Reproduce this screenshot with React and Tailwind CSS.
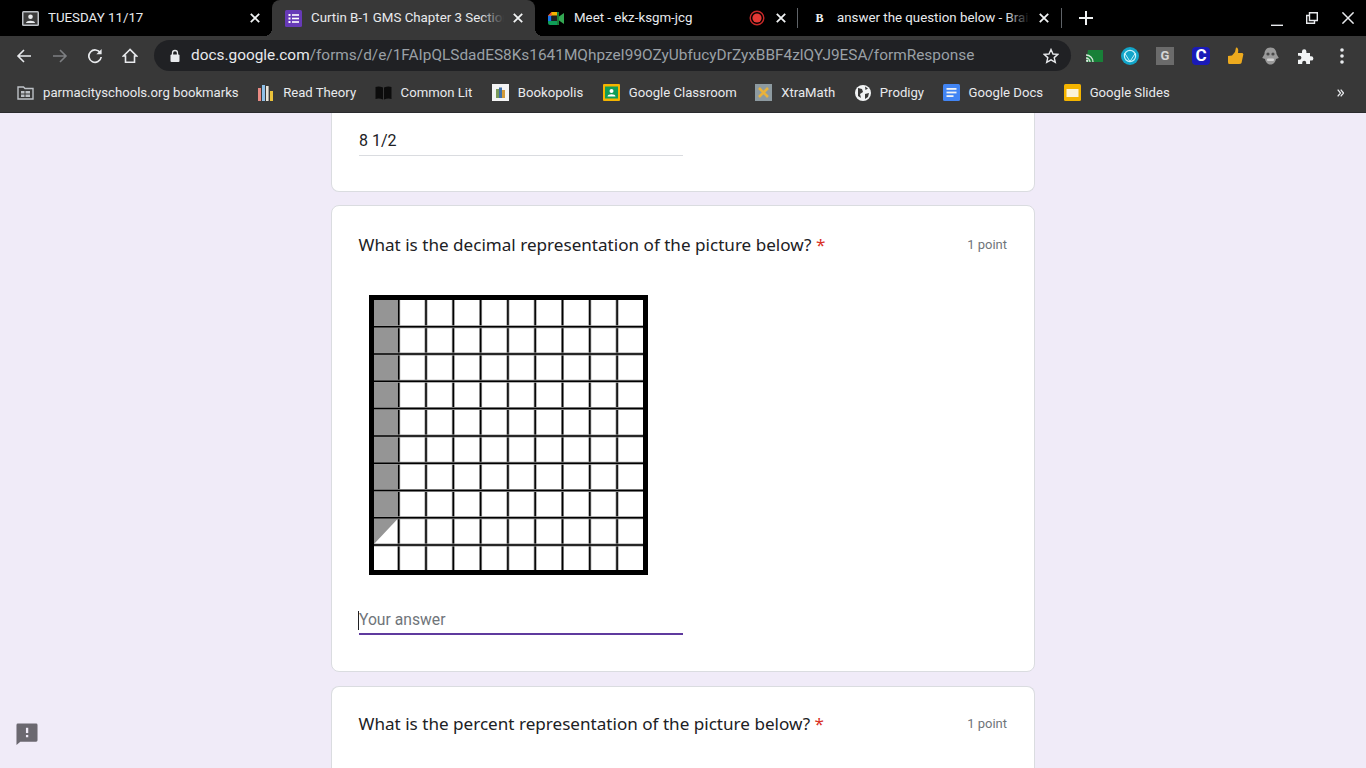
import React from 'react';

const CloseIcon = ({ className = '' }) => (
  <svg className={`w-[10px] h-[10px] shrink-0 ${className}`} viewBox="0 0 10 10" stroke="#f1f3f4" strokeWidth="1.8" fill="none">
    <path d="M0.8 0.8 L9.2 9.2 M9.2 0.8 L0.8 9.2" />
  </svg>
);

const ClassroomTabIcon = () => (
  <svg className="w-[17px] h-[17px] shrink-0" viewBox="0 0 17 17">
    <rect x="0" y="1" width="17" height="15" rx="1.5" fill="#bdc1c6" />
    <rect x="1.5" y="2.5" width="14" height="12" fill="#3c3c3c" />
    <circle cx="8.5" cy="6.8" r="2.3" fill="#e8eaed" />
    <path d="M4 13 C4 10 13 10 13 13 Z" fill="#e8eaed" />
  </svg>
);

const FormsIcon = () => (
  <svg className="w-[17px] h-[17px] shrink-0" viewBox="0 0 17 17">
    <rect width="17" height="17" rx="1.5" fill="#673ab7" />
    <g fill="#fff">
      <rect x="3.5" y="4" width="2" height="2" />
      <rect x="7" y="4.2" width="7" height="1.6" />
      <rect x="3.5" y="7.5" width="2" height="2" />
      <rect x="7" y="7.7" width="7" height="1.6" />
      <rect x="3.5" y="11" width="2" height="2" />
      <rect x="7" y="11.2" width="7" height="1.6" />
    </g>
  </svg>
);

const MeetIcon = () => (
  <svg className="w-[17px] h-[17px] shrink-0" viewBox="0 0 17 17">
    <path d="M3.5 2 H11 V6 H0 Z" fill="#f4b400" />
    <rect x="0" y="5.5" width="3.5" height="6" fill="#1a73e8" />
    <path d="M0 11 H11 V15 H2 Q0 15 0 13 Z" fill="#0f9d58" />
    <rect x="3.5" y="5.5" width="7.5" height="5.5" fill="#1f1f1f" />
    <path d="M11 2 V15 H9 V2 Z" fill="#188038" />
    <path d="M11 6.5 L16 3 V14 L11 10.5 Z" fill="#34a853" />
    <path d="M0 5.5 L3.5 2 V5.5 Z" fill="#ea4335" />
  </svg>
);

const RecordIcon = () => (
  <svg className="w-[16px] h-[16px] shrink-0 mr-[2px]" viewBox="0 0 16 16">
    <circle cx="8" cy="8" r="6.8" fill="none" stroke="#c62828" strokeWidth="1.4" />
    <circle cx="8" cy="8" r="4.6" fill="#e53935" />
  </svg>
);

const NewTabIcon = () => (
  <svg className="block w-[14px] h-[14px]" viewBox="0 0 14 14" fill="none" stroke="#f1f3f4" strokeWidth="2">
    <path d="M7 0 V14 M0 7 H14" />
  </svg>
);

const Tab = ({ icon, title, active, extra, fade }) => (
  <div className={`relative w-[263px] h-[36px] flex items-center shrink-0 pl-[13px] pr-[12px] ${active ? 'bg-[#383838] rounded-t-lg' : ''}`}>
    {active && (
      <>
        <span className="absolute -left-2 bottom-0 w-2 h-2 bg-[radial-gradient(circle_at_0_0,#000_8px,#383838_8px)]" />
        <span className="absolute -right-2 bottom-0 w-2 h-2 bg-[radial-gradient(circle_at_100%_0,#000_8px,#383838_8px)]" />
      </>
    )}
    {icon}
    <div className="relative flex-1 min-w-0 ml-[9px] overflow-hidden whitespace-nowrap text-[13.3px] text-[#e8eaed]">
      {title}
      {fade && (
        <div className={`absolute right-0 top-0 bottom-0 w-6 bg-gradient-to-r from-transparent ${active ? 'to-[#383838]' : 'to-black'}`} />
      )}
    </div>
    {extra}
    <CloseIcon className="ml-[9px]" />
  </div>
);

const ExtensionIcons = () => (
  <div className="flex items-center flex-1">
    <svg className="ml-[15px] w-[17px] h-[12px]" viewBox="0 0 17 12">
      <path d="M2 0 H17 V12 H0 Z" fill="#188038" />
      <path d="M0 5 A7 7 0 0 1 7 12 M0 8 A4 4 0 0 1 4 12" fill="none" stroke="#d9e7dc" strokeWidth="1.3" />
      <circle cx="1.2" cy="10.8" r="1.2" fill="#d9e7dc" />
    </svg>
    <svg className="ml-[18px] w-[18px] h-[18px]" viewBox="0 0 18 18">
      <circle cx="9" cy="9" r="9" fill="#12a5c9" />
      <circle cx="9" cy="9" r="5.6" fill="none" stroke="#c6f1fa" strokeWidth="1.2" />
      <path d="M3.5 6 L9 14.5 L14.5 6" fill="none" stroke="#c6f1fa" strokeWidth="1" />
    </svg>
    <div className="ml-[17px] w-[18px] h-[18px] bg-[#6b6b6b] flex items-center justify-center text-[13px] font-bold text-[#d5d5d5]">G</div>
    <div className="ml-[18px] w-[18px] h-[18px] rounded-[4px] bg-[#1a1ab8] flex items-center justify-center text-[17px] font-bold text-white">C</div>
    <svg className="ml-[17px] w-[17px] h-[18px]" viewBox="0 0 17 18">
      <path d="M1 9 L5 8.5 L8 5 L9 0.5 Q12 0.5 11 6 H15.5 Q17 7 16 9 L14.5 16 Q14 17 12 17 H2 Q1 17 1 15 Z" fill="#edaa1e" />
    </svg>
    <svg className="ml-[18px] w-[17px] h-[18px]" viewBox="0 0 17 18">
      <path d="M8.5 0.5 C13 0.5 14.5 4 14.5 7 L16.8 11 L14 12 C13 16 11 17.5 8.5 17.5 C6 17.5 4 16 3 12 L0.2 11 L2.5 7 C2.5 4 4 0.5 8.5 0.5 Z" fill="#9a9a9a" />
      <circle cx="6" cy="7" r="1.6" fill="#4a4a4a" />
      <circle cx="11" cy="7" r="1.6" fill="#4a4a4a" />
      <rect x="5" y="11.5" width="7" height="2.5" rx="1" fill="#d2d2d2" />
    </svg>
    <svg className="ml-[18px] w-[17px] h-[17px]" viewBox="0 0 17 17" fill="#f1f3f4">
      <path d="M1 5 H5 V3.5 A2.2 2.2 0 0 1 9.4 3.5 V5 H13 V8.2 H14.2 A2.2 2.2 0 0 1 14.2 12.6 H13 V16 H9.2 V14.8 A2 2 0 0 0 5.2 14.8 V16 H1 V11.8 H2.4 A2 2 0 0 0 2.4 7.8 H1 Z" />
    </svg>
    <svg className="ml-[26px] w-[4px] h-[16px]" viewBox="0 0 4 16" fill="#e8eaed">
      <circle cx="2" cy="2" r="1.8" />
      <circle cx="2" cy="8" r="1.8" />
      <circle cx="2" cy="14" r="1.8" />
    </svg>
  </div>
);

const Toolbar = () => (
  <div className="h-[40px] bg-[#383838] flex items-center">
    <div className="w-[154px] flex items-center shrink-0">
      <svg className="ml-[16px] w-[16px] h-[16px]" viewBox="0 0 16 16" fill="none" stroke="#e8eaed" strokeWidth="1.6">
        <path d="M15 8 H2 M8 2 L2 8 L8 14" />
      </svg>
      <svg className="ml-[20px] w-[16px] h-[16px]" viewBox="0 0 16 16" fill="none" stroke="#7d7f82" strokeWidth="1.6">
        <path d="M1 8 H14 M8 2 L14 8 L8 14" />
      </svg>
      <svg className="ml-[19px] w-[16px] h-[16px]" viewBox="0 0 16 16" fill="none" stroke="#e8eaed" strokeWidth="1.7">
        <path d="M13.4 5 A6.2 6.2 0 1 0 14.2 9" />
        <path d="M14.6 1 V6.2 H9.4 Z" fill="#e8eaed" stroke="none" />
      </svg>
      <svg className="ml-[19px] w-[16px] h-[16px]" viewBox="0 0 16 16" fill="none" stroke="#e8eaed" strokeWidth="1.6">
        <path d="M8 1.5 L1.5 8 H3.5 V14.2 H12.5 V8 H14.5 Z" />
      </svg>
    </div>
    <div className="w-[917px] h-[31px] shrink-0 self-start mt-[4px] rounded-full bg-[#202124] flex items-center">
      <svg className="ml-[15px] w-[12px] h-[14px]" viewBox="0 0 12 14" fill="#e8eaed">
        <rect x="1.5" y="5.5" width="9" height="7.5" rx="1" />
        <path d="M3.5 6 V4 A2.5 2.5 0 0 1 8.5 4 V6" fill="none" stroke="#e8eaed" strokeWidth="1.3" />
      </svg>
      <div className="ml-[10px] text-[15.4px] text-[#9aa0a6] whitespace-nowrap">
        <span className="text-[#e8eaed]">docs.google.com</span>/forms/d/e/1FAIpQLSdadES8Ks1641MQhpzeI99OZyUbfucyDrZyxBBF4zlQYJ9ESA/formResponse
      </div>
      <svg className="ml-auto mr-[12px] w-[16px] h-[16px]" viewBox="0 0 16 16" fill="none" stroke="#e8eaed" strokeWidth="1.4">
        <path d="M8 1.5 L10 6 L14.9 6.4 L11.2 9.6 L12.3 14.4 L8 11.9 L3.7 14.4 L4.8 9.6 L1.1 6.4 L6 6 Z" />
      </svg>
    </div>
    <ExtensionIcons />
  </div>
);

const Bookmark = ({ icon, label, className }) => (
  <div className={`flex items-center shrink-0 ${className}`}>
    {icon}
    <span className="ml-[9px] text-[13.15px] text-[#e8eaed] whitespace-nowrap">{label}</span>
  </div>
);

const bookmarkIcons = {
  folder: (
    <svg className="w-[17px] h-[14px] shrink-0" viewBox="0 0 17 14">
      <path d="M1 1 H6.5 L8 2.5 H16 V13 H1 Z" fill="none" stroke="#bdc1c6" strokeWidth="1.4" />
      <rect x="4" y="5" width="9" height="6" fill="#bdc1c6" />
      <path d="M8 5 V11 M4 8 H13" stroke="#383838" strokeWidth="1" />
    </svg>
  ),
  read: (
    <svg className="w-[17px] h-[17px] shrink-0" viewBox="0 0 17 17">
      <rect x="1" y="4" width="3" height="13" fill="#e98a83" />
      <rect x="5" y="1" width="3" height="16" fill="#8fc0e8" />
      <rect x="9" y="2" width="2.6" height="15" fill="#e8e3d8" />
      <rect x="13" y="7" width="3" height="10" fill="#eac23a" />
    </svg>
  ),
  common: (
    <svg className="w-[17px] h-[14px] shrink-0" viewBox="0 0 17 14">
      <path d="M0.5 1 Q4 0 8 1.5 V13.5 Q4 12 0.5 13 Z M16.5 1 Q13 0 9 1.5 V13.5 Q13 12 16.5 13 Z" fill="#0c0c0c" />
    </svg>
  ),
  book: (
    <svg className="w-[17px] h-[17px] shrink-0" viewBox="0 0 17 17">
      <rect width="17" height="17" fill="#f4f4f4" />
      <rect x="4" y="5" width="3" height="9" fill="#7a9a5a" />
      <rect x="7" y="3.5" width="3" height="10.5" fill="#3f6fa8" />
      <rect x="10" y="6" width="3" height="8" fill="#d19a3a" />
    </svg>
  ),
  classroom: (
    <svg className="w-[17px] h-[17px] shrink-0" viewBox="0 0 17 17">
      <rect width="17" height="17" rx="1" fill="#f4b400" />
      <rect x="2" y="2.5" width="13" height="12" fill="#0f9d58" />
      <circle cx="8.5" cy="7" r="2" fill="#fff" />
      <path d="M4.5 12.5 C4.5 9.5 12.5 9.5 12.5 12.5 Z" fill="#fff" />
    </svg>
  ),
  xtra: (
    <svg className="w-[17px] h-[17px] shrink-0" viewBox="0 0 17 17">
      <rect width="17" height="17" fill="#8d9aa0" />
      <path d="M4 4 L13 13 M13 4 L4 13" stroke="#e9b23a" strokeWidth="2.6" />
    </svg>
  ),
  prodigy: (
    <svg className="w-[16px] h-[16px] shrink-0" viewBox="0 0 16 16">
      <circle cx="8" cy="8" r="8" fill="#f1f3f4" />
      <path d="M3 3 L7 4 L8 7 L5 9 L6 13 L3 11 Z M10 9 L14 8 L13 12 L10 14 Z M10 1.5 L13 3.5 L10.5 5 Z" fill="#383838" />
    </svg>
  ),
  docs: (
    <svg className="w-[17px] h-[17px] shrink-0" viewBox="0 0 17 17">
      <rect width="17" height="17" rx="1.5" fill="#4285f4" />
      <rect x="3.5" y="4" width="10" height="1.8" fill="#f1f3f4" />
      <rect x="3.5" y="7.6" width="10" height="1.8" fill="#f1f3f4" />
      <rect x="3.5" y="11.2" width="7" height="1.8" fill="#f1f3f4" />
    </svg>
  ),
  slides: (
    <svg className="w-[17px] h-[17px] shrink-0" viewBox="0 0 17 17">
      <rect width="17" height="17" rx="1.5" fill="#f4b400" />
      <rect x="2.5" y="5" width="12" height="8" fill="#fbf3d8" />
    </svg>
  ),
};

const BookmarksBar = () => (
  <div className="h-[34px] bg-[#383838] flex items-center pb-[2px] border-b border-[#2a2b2e] box-content">
    <Bookmark className="ml-[17px]" icon={bookmarkIcons.folder} label="parmacityschools.org bookmarks" />
    <Bookmark className="ml-[18.5px]" icon={bookmarkIcons.read} label="Read Theory" />
    <Bookmark className="ml-[18.5px]" icon={bookmarkIcons.common} label="Common Lit" />
    <Bookmark className="ml-[19.5px]" icon={bookmarkIcons.book} label="Bookopolis" />
    <Bookmark className="ml-[19.5px]" icon={bookmarkIcons.classroom} label="Google Classroom" />
    <Bookmark className="ml-[18.5px]" icon={bookmarkIcons.xtra} label="XtraMath" />
    <Bookmark className="ml-[19.5px]" icon={bookmarkIcons.prodigy} label="Prodigy" />
    <Bookmark className="ml-[18.5px]" icon={bookmarkIcons.docs} label="Google Docs" />
    <Bookmark className="ml-[20.5px]" icon={bookmarkIcons.slides} label="Google Slides" />
    <svg className="ml-auto mr-[22px] w-[7px] h-[8px]" viewBox="0 0 7 8" fill="none" stroke="#e8eaed" strokeWidth="1.3">
      <path d="M0.7 0.7 L3.5 4 L0.7 7.3 M3.7 0.7 L6.5 4 L3.7 7.3" />
    </svg>
  </div>
);

// the grid picture from the question, 10 x 10 with 8.5 cells shaded
const GridPicture = () => {
  const xs = [0, 1, 2, 3, 4, 5, 6, 7, 8].map((i) => 29.7 + i * 27.3);
  const ys = [0, 1, 2, 3, 4, 5, 6, 7, 8].map((i) => 31.7 + i * 27.3);
  return (
    <svg className="block w-[279px] h-[280px]" viewBox="0 0 279 280">
      <rect width="279" height="280" fill="#000" />
      <rect x="5" y="5" width="269" height="270" fill="#fff" />
      <rect x="5" y="5" width="25" height="218" fill="#959595" />
      <path d="M5 223 H29.5 L5 249 Z" fill="#959595" />
      {xs.map((x) => (
        <g key={x}>
          <line x1={x} y1="5" x2={x} y2="275" stroke="#9a9a9a" strokeWidth="3" />
          <line x1={x} y1="5" x2={x} y2="275" stroke="#000" strokeWidth="1.5" />
        </g>
      ))}
      {ys.map((y) => (
        <g key={y}>
          <line x1="5" y1={y} x2="274" y2={y} stroke="#9a9a9a" strokeWidth="3" />
          <line x1="5" y1={y} x2="274" y2={y} stroke="#000" strokeWidth="1.5" />
        </g>
      ))}
    </svg>
  );
};

const QuestionTitle = ({ children }) => (
  <div className="flex items-center justify-between">
    <div className="text-[17.1px] leading-[24px] text-[#202124] font-['Noto_Sans',sans-serif] -ml-[0.5px]">
      {children} <span className="text-[#d93025]">*</span>
    </div>
    <div className="text-[13px] text-[#70757a]">1 point</div>
  </div>
);

export default function App() {
  return (
    <div className="h-screen w-full overflow-hidden flex flex-col font-['Roboto',sans-serif]">
      <div className="h-[36px] bg-black flex items-center shrink-0">
        <div className="w-[9px] shrink-0" />
        <Tab icon={<ClassroomTabIcon />} title="TUESDAY 11/17" />
        <Tab active icon={<FormsIcon />} title="Curtin B-1 GMS Chapter 3 Section 3 Quiz" fade />
        <Tab icon={<MeetIcon />} title="Meet - ekz-ksgm-jcg" extra={<RecordIcon />} />
        <div className="w-px h-[20px] bg-[#5f6368] -ml-px" />
        <Tab
          icon={<span className="w-[17px] shrink-0 text-center text-[12px] font-bold text-[#f1f3f4] font-['Liberation_Serif',serif]">B</span>}
          title="answer the question below - Brainly.com"
          fade
        />
        <div className="w-px h-[20px] bg-[#5f6368]" />
        <div className="ml-[17px]"><NewTabIcon /></div>
        <svg className="ml-auto w-[12px] h-[12px] mt-[3px]" viewBox="0 0 12 12" stroke="#e8eaed" strokeWidth="1.4" fill="none">
          <path d="M0 11.3 H12" />
        </svg>
        <svg className="ml-[23px] w-[12px] h-[12px]" viewBox="0 0 12 12" stroke="#e8eaed" strokeWidth="1.4" fill="none">
          <path d="M3.5 0.7 H11.3 V8.5 H3.5 Z M3.5 3.5 H0.7 V11.3 H8.5 V8.5" />
        </svg>
        <svg className="ml-[24px] mr-[12px] w-[12px] h-[12px]" viewBox="0 0 12 12" stroke="#e8eaed" strokeWidth="1.5" fill="none">
          <path d="M0.4 0.4 L11.6 11.6 M11.6 0.4 L0.4 11.6" />
        </svg>
      </div>
      <Toolbar />
      <BookmarksBar />

      <div className="relative flex-1 min-h-0 bg-[#f0ebf8] overflow-hidden">
        <div className="w-[704px] ml-[331px] flex flex-col">
          <div className="bg-white border border-t-0 border-[#dadce0] rounded-b-lg h-[79px] pl-[27px] pt-[16px]">
            <div className="w-[324px] h-[27px] border-b border-[#dadce0] text-[16px] leading-[24px] text-[#202124]">8 1/2</div>
          </div>

          <div className="mt-[13px] bg-white border border-[#dadce0] rounded-lg h-[467px] pl-[27px] pr-[27px] pt-[27px]">
            <QuestionTitle>What is the decimal representation of the picture below?</QuestionTitle>
            <div className="ml-[10px] mt-[38px]">
              <GridPicture />
            </div>
            <div className="relative w-[324px] h-[32px] mt-[28px] border-b-2 border-[#5f3a9e] text-[15.7px] leading-[34px] text-[#70757a]">
              <span className="absolute -left-px top-[8px] w-px h-[19px] bg-[#202124]" />
              Your answer
            </div>
          </div>

          <div className="mt-[14px] bg-white border border-b-0 border-[#dadce0] rounded-t-lg h-[100px] pl-[27px] pr-[27px] pt-[25px]">
            <QuestionTitle>What is the percent representation of the picture below?</QuestionTitle>
          </div>
        </div>

        {/* feedback button */}
        <svg className="absolute left-[16px] bottom-[23px] w-[22px] h-[22px]" viewBox="0 0 23 23">
          <path d="M2 0.5 H21 Q22.5 0.5 22.5 2 V18 Q22.5 19.5 21 19.5 H4.5 L0.5 23 V2 Q0.5 0.5 2 0.5 Z" fill="#6b6870" />
          <rect x="10.4" y="5" width="2.4" height="5.5" fill="#f0ebf8" />
          <rect x="10.4" y="12.5" width="2.4" height="2.4" fill="#f0ebf8" />
        </svg>
      </div>
    </div>
  );
}
